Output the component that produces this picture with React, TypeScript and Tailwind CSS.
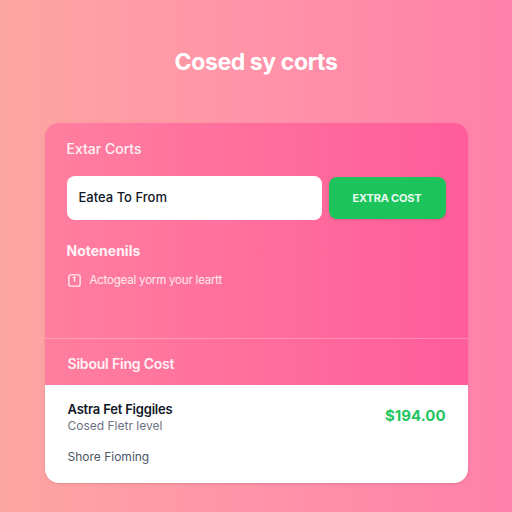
function NoteIcon() {
  return (
    <svg width="15" height="15" viewBox="0 0 24 24" fill="none" stroke="currentColor" strokeWidth="2.2" strokeLinecap="round" strokeLinejoin="round">
      <rect x="3" y="3" width="18" height="18" rx="3" />
      <path d="M12 7v6" />
      <path d="M10 7h3" />
    </svg>
  )
}

export default function App() {
  return (
    <div
      className="w-[512px] h-[512px] overflow-hidden flex flex-col items-center bg-gradient-to-r from-[#fda6a2] via-[#ff93a8] to-[#ff80aa]"
      style={{ fontFamily: 'Inter, "Liberation Sans", sans-serif' }}
    >
      <h1 className="mt-[46px] text-[23px] leading-[32px] font-bold text-white tracking-[-0.4px]">
        Cosed sy corts
      </h1>

      <div className="mt-[45px] w-[423px] h-[360px] rounded-[14px] overflow-hidden flex flex-col bg-gradient-to-r from-[#ff7e9f] to-[#ff5c9b] shadow-sm">
        <div className="px-[22px] pt-[17px] h-[216px] border-b border-white/25">
          <div className="text-[14px] leading-[18px] font-medium text-white/90">Extar Corts</div>

          <div className="mt-[18px] flex gap-[7px]">
            <div className="w-[255px] h-[44px] rounded-[8px] bg-white flex items-center px-3 text-[13px] font-medium text-gray-900">
              Eatea To From
            </div>
            <button className="w-[117px] h-[42px] mt-px rounded-[8px] bg-[#1dc45c] text-[11px] font-bold text-white/90 tracking-[-0.2px] shadow-sm">
              EXTRA COST
            </button>
          </div>

          <div className="mt-[22px] text-[14px] leading-[18px] font-bold text-white/90">Notenenils</div>

          <div className="mt-[12px] flex items-center gap-[8px] text-[11.5px] text-white/85 tracking-[-0.2px]">
            <NoteIcon />
            <span>Actogeal yorm your leartt</span>
          </div>
        </div>

        <div className="px-[23px] h-[46px] flex items-center pt-[3px] text-[14px] font-semibold text-white/90 tracking-[-0.2px]">
          Siboul Fing Cost
        </div>

        <div className="flex-1 bg-white pl-[23px] pr-[22px] pt-[16px]">
          <div className="flex justify-between">
            <div>
              <div className="text-[13px] leading-[17px] font-semibold text-gray-900 tracking-[-0.2px]">Astra Fet Figgiles</div>
              <div className="text-[12px] leading-[16px] text-gray-500">Cosed Fletr level</div>
            </div>
            <div className="mt-[4px] text-[15px] font-bold text-[#22c55e]">$194.00</div>
          </div>
          <div className="mt-[14px] text-[12px] text-gray-600">Shore Fioming</div>
        </div>
      </div>
    </div>
  )
}
